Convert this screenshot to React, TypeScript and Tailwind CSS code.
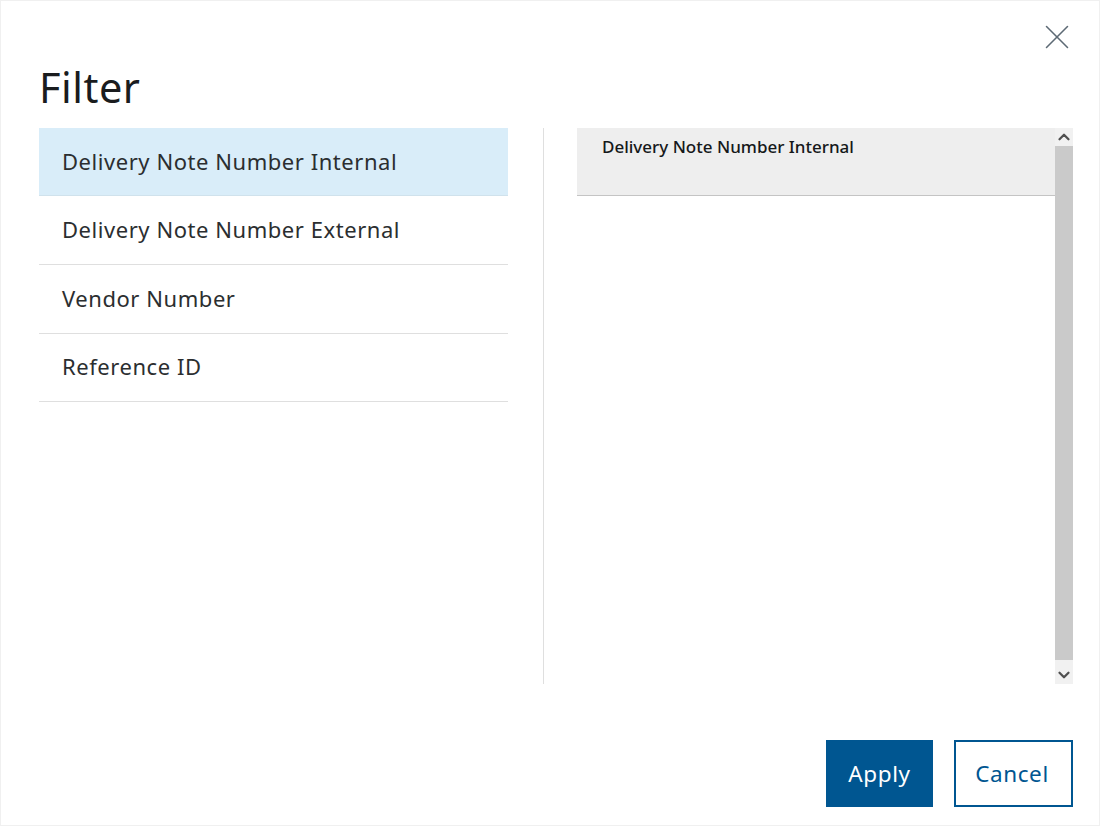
import { X, ChevronUp, ChevronDown } from "lucide-react";

const fields = [
  "Delivery Note Number Internal",
  "Delivery Note Number External",
  "Vendor Number",
  "Reference ID",
];

export default function App() {
  return (
    <div className="w-[1100px] h-[826px] bg-white flex flex-col border border-[#f0f0f0] pl-[38px] pr-[26px] font-['Noto_Sans',sans-serif] overflow-hidden">
      <div className="flex justify-end h-[21px]">
        <button className="w-[42px] h-[42px] mt-[15px] -mr-[5px] text-[#5d6a75]">
          <X size={42} strokeWidth={0.9} />
        </button>
      </div>
      <h1 className="h-[106px] pt-[38px] text-[41.5px] leading-[54px] text-[#1a1c1e] tracking-[0.5px]">Filter</h1>
      <div className="flex h-[556px]">
        <div className="w-[469px] shrink-0">
          {fields.map((name, i) => (
            <div
              key={name}
              className={
                "flex items-center pl-[23px] pb-[1px] text-[22px] tracking-[0.55px] text-[#2b2e30] border-b " +
                (i === 0 ? "h-[68px] bg-[#d9edf9] border-[#d0e2ec]" : "h-[68.8px] border-[#dfdfdf]")
              }
            >
              {name}
            </div>
          ))}
        </div>
        <div className="w-px bg-[#dfdfdf] ml-[35px] mr-[33px]" />
        <div className="flex-1 flex">
          <div className="flex-1">
            <div className="h-[68px] bg-[#eeeeee] border-b border-[#c4c4c4] pl-[25px] pt-[6px] text-[17px] leading-[26px] font-medium text-[#15181a]">
              Delivery Note Number Internal
            </div>
          </div>
          <div className="w-[18px] flex flex-col bg-[#f1f1f1] text-[#505050]">
            <div className="h-[18px] flex items-center justify-center">
              <ChevronUp size={18} strokeWidth={3} />
            </div>
            <div className="flex-1 bg-[#cacaca]" />
            <div className="h-[24px] pt-[6px] flex items-center justify-center">
              <ChevronDown size={18} strokeWidth={3} />
            </div>
          </div>
        </div>
      </div>
      <div className="flex justify-end gap-[21px] mt-[56px]">
        <button className="w-[107px] h-[67px] bg-[#005691] text-white text-[22.5px] tracking-[0.6px]">Apply</button>
        <button className="w-[119px] h-[67px] border-2 border-[#005691] pr-[3px] text-[#005691] text-[22.5px] tracking-[0.6px]">Cancel</button>
      </div>
    </div>
  );
}
